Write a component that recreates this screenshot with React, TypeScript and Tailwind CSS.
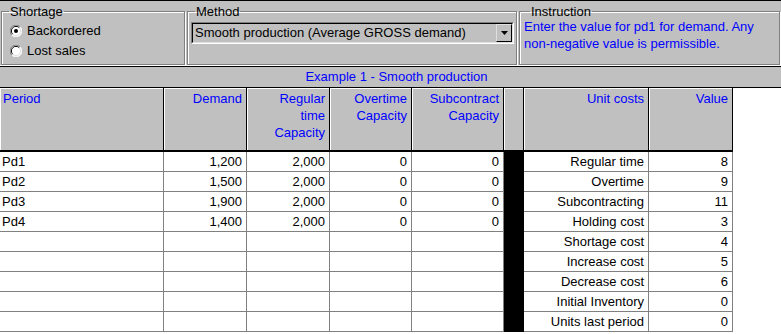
import React from "react";

const COLS = [164, 83, 83, 82, 92, 20, 125, 84];

const periods: string[][] = [
  ["Pd1", "1,200", "2,000", "0", "0"],
  ["Pd2", "1,500", "2,000", "0", "0"],
  ["Pd3", "1,900", "2,000", "0", "0"],
  ["Pd4", "1,400", "2,000", "0", "0"],
  ["", "", "", "", ""],
  ["", "", "", "", ""],
  ["", "", "", "", ""],
  ["", "", "", "", ""],
  ["", "", "", "", ""],
];

const costs: string[][] = [
  ["Regular time", "8"],
  ["Overtime", "9"],
  ["Subcontracting", "11"],
  ["Holding cost", "3"],
  ["Shortage cost", "4"],
  ["Increase cost", "5"],
  ["Decrease cost", "6"],
  ["Initial Inventory", "0"],
  ["Units last period", "0"],
];

function Radio({ checked }: { checked: boolean }) {
  return (
    <svg width="12" height="12" viewBox="0 0 12 12" className="shrink-0">
      <circle cx="6" cy="6" r="5.5" fill="#ffffff" />
      <path d="M10.2 1.8 A5.9 5.9 0 0 0 1.8 10.2" stroke="#808080" strokeWidth="1" fill="none" />
      <path d="M1.8 10.2 A5.9 5.9 0 0 0 10.2 1.8" stroke="#ffffff" strokeWidth="1" fill="none" />
      <path d="M9.3 2.7 A4.5 4.5 0 0 0 2.7 9.3" stroke="#000000" strokeWidth="1" fill="none" />
      <path d="M2.7 9.3 A4.5 4.5 0 0 0 9.3 2.7" stroke="#dfdfdf" strokeWidth="1" fill="none" />
      {checked && <circle cx="6" cy="6" r="2" fill="#000000" />}
    </svg>
  );
}

const groupCls =
  "border border-[#808080] shadow-[inset_1px_1px_0_#ffffff,1px_1px_0_#ffffff] h-[61px] px-0";

export default function App() {
  return (
    <div
      className="w-[781px] h-[334px] bg-white overflow-hidden text-[13px] text-black"
      style={{ fontFamily: '"Liberation Sans", Arial, sans-serif' }}
    >
      {/* top panel */}
      <div className="h-[66px] bg-[#c0c0c0] border-t border-black border-b border-b-white flex pt-[3px] pl-[1px] gap-[2px]">
        <fieldset className={groupCls + " w-[184px]"}>
          <legend className="ml-[7px] px-[1px] leading-[15px]">Shortage</legend>
          <div className="flex flex-col pl-[8px] pt-[2px]">
            <div className="flex items-center h-[20px] gap-[5px]">
              <Radio checked />
              <span className="leading-[20px]">Backordered</span>
            </div>
            <div className="flex items-center h-[20px] gap-[5px]">
              <Radio checked={false} />
              <span className="leading-[20px]">Lost sales</span>
            </div>
          </div>
        </fieldset>
        <fieldset className={groupCls + " w-[330px]"}>
          <legend className="ml-[7px] px-[1px] leading-[15px]">Method</legend>
          <div className="mt-[3px] ml-[3px] mr-[2px] h-[22px] border border-t-[#808080] border-l-[#808080] border-b-white border-r-white">
            <div className="h-full border border-t-black border-l-black border-b-[#dfdfdf] border-r-[#dfdfdf] flex items-center bg-[#c0c0c0]">
              <span className="flex-1 pl-[2px] leading-[18px] whitespace-nowrap">
                Smooth production (Average GROSS demand)
              </span>
              <div className="w-[16px] h-[18px] border border-t-[#dfdfdf] border-l-[#dfdfdf] border-b-black border-r-black flex items-center justify-center">
                <svg width="7" height="4" viewBox="0 0 7 4">
                  <polygon points="0,0 7,0 3.5,4" fill="#000" />
                </svg>
              </div>
            </div>
          </div>
        </fieldset>
        <fieldset className={groupCls + " w-[261px]"}>
          <legend className="ml-[10px] px-[1px] leading-[15px]">Instruction</legend>
          <div className="-mt-[1px] pl-[4px] leading-[17px] text-[#0000ff] whitespace-nowrap">
            Enter the value for pd1 for demand. Any
            <br />
            non-negative value is permissible.
          </div>
        </fieldset>
      </div>

      {/* title bar */}
      <div className="h-[22px] bg-[#c0c0c0] border-t border-b border-black flex items-center justify-center pl-[12px] text-[#0000ff] leading-[20px]">
        Example 1 - Smooth production
      </div>

      {/* header row */}
      <div className="flex h-[64px] bg-white">
        {[
          { t: ["Period"], left: true },
          { t: ["Demand"] },
          { t: ["Regular", "time", "Capacity"] },
          { t: ["Overtime", "Capacity"] },
          { t: ["Subcontract", "Capacity"] },
          { t: [] },
          { t: ["Unit costs"] },
          { t: ["Value"] },
        ].map((h, i) => (
          <div
            key={i}
            style={{ width: COLS[i] }}
            className={
              "shrink-0 h-[64px] bg-[#c0c0c0] border-r border-black border-b-2 border-b-black shadow-[inset_1px_1px_0_#ffffff] pt-[2px] leading-[17px] text-[#0000ff] " +
              (h.left ? "text-left pl-[3px]" : "text-right pr-[4px]")
            }
          >
            {h.t.map((l, j) => (
              <div key={j}>{l}</div>
            ))}
          </div>
        ))}
      </div>

      {/* data rows */}
      {periods.map((r, ri) => (
        <div key={ri} className="flex h-[20px]">
          {r.map((v, ci) => (
            <div
              key={ci}
              style={{ width: COLS[ci] }}
              className={
                "shrink-0 h-[20px] border-r border-b border-[#808080] leading-[19px] " +
                (ci === 0 ? "text-left pl-[2px]" : "text-right pr-[4px]")
              }
            >
              {v}
            </div>
          ))}
          <div style={{ width: COLS[5] }} className="shrink-0 h-[20px] bg-black" />
          <div
            style={{ width: COLS[6] }}
            className="shrink-0 h-[20px] border-r border-b border-[#808080] leading-[19px] text-right pr-[4px]"
          >
            {costs[ri][0]}
          </div>
          <div
            style={{ width: COLS[7] }}
            className="shrink-0 h-[20px] border-r border-b border-[#808080] leading-[19px] text-right pr-[4px]"
          >
            {costs[ri][1]}
          </div>
        </div>
      ))}
    </div>
  );
}
